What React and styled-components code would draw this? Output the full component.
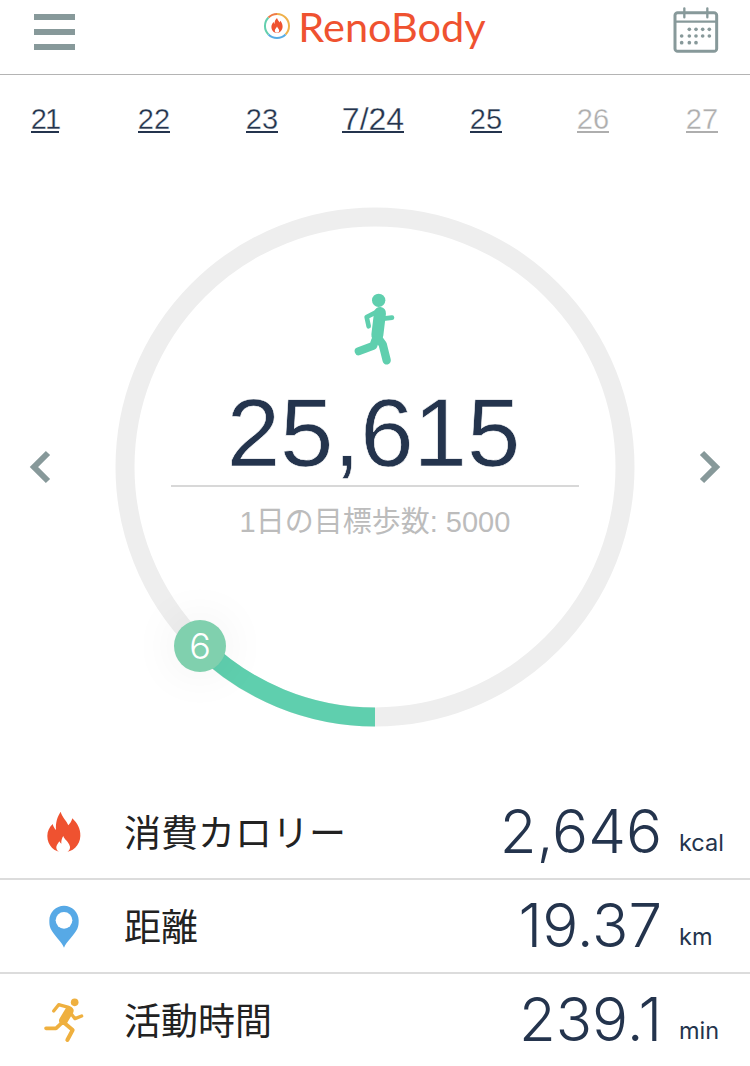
import React from 'react';
import styled, { createGlobalStyle } from 'styled-components';

const Global = createGlobalStyle`
  html, body { margin: 0; padding: 0; background: #fff; }
  body { font-family: "Liberation Sans", "Noto Sans CJK JP", sans-serif; color: #24344d; }
`;
const Page = styled.div`
  width: 750px; height: 1066px; overflow: hidden; display: flex; flex-direction: column;
`;
const Header = styled.header`
  height: 74px; flex: none; border-bottom: 1px solid #b4b4b4; padding: 0 20px 0 34px;
  display: flex; align-items: flex-start; justify-content: space-between;
`;
const Burger = styled.div`
  width: 41px; margin-top: 14px; display: flex; flex-direction: column; gap: 9px;
`;
const BurgerBar = styled.span`
  display: block; height: 6px; background: #87999a;
`;
const Logo = styled.div`
  display: flex; align-items: center; gap: 6px; margin-top: 2px; margin-left: 13px;
`;
const LogoText = styled.span`
  font-family: Lato, sans-serif; font-weight: 400; font-size: 41.5px; line-height: 48px;
  color: #ef5230;
`;
const IconSvg = styled.svg`
  display: block; flex: none;
`;
const Dates = styled.nav`
  height: 132px; flex: none; display: grid; grid-template-columns: 90px 128px 88px 134px 92px 122px 96px;
  justify-items: center; align-items: start; padding-top: 26px; box-sizing: border-box;
`;
const DateLink = styled.span`
  display: block; height: 30px; font-size: ${p => p.$big ? 32 : 29}px; line-height: 36px;
  letter-spacing: ${p => p.$track || 0}px;
  -webkit-text-stroke: .3px #fff;
  border-bottom: 2px solid ${p => p.$off ? '#aeaeae' : '#24344d'};
  color: ${p => p.$off ? '#aeaeae' : '#24344d'};
`;
const GaugeRow = styled.section`
  flex: none; height: 520px; display: flex; align-items: center; justify-content: space-between; padding: 0 28px;
`;
const Chevron = styled.svg`
  display: block; flex: none;
`;
const Gauge = styled.div`
  position: relative; width: 520px; height: 520px; flex: none; display: flex; flex-direction: column; align-items: center;
`;
const RingSvg = styled.svg`
  position: absolute; inset: 0; display: block;
`;
const Center = styled.div`
  position: relative; display: flex; flex-direction: column; align-items: center; margin-top: 78px;
`;
const Steps = styled.div`
  font-size: 96px; line-height: 100px; width: 408px; text-align: center; text-indent: -3px;
  -webkit-text-stroke: .6px #fff;
  padding-bottom: 2px; margin-top: 13px; border-bottom: 2px solid #d8d8d8; color: #24344d;
`;
const Goal = styled.div`
  font-size: 29px; line-height: 36px; margin-top: 17px; color: #bcbcbc;
`;
const Badge = styled.div`
  position: absolute; left: 59px; top: 412.5px; width: 52px; height: 52px; border-radius: 50%;
  background: #80d0ae; color: #fff; display: flex; align-items: center; justify-content: center;
  font-family: Inter, sans-serif; font-weight: 300; font-size: 36px; box-shadow: 0 0 50px rgba(0,0,0,.07);
`;
const Stats = styled.section`
  margin-top: 59px; display: flex; flex-direction: column;
`;
const Stat = styled.div`
  display: grid; grid-template-columns: 124px 1fr auto 88px; align-items: center; height: ${p => p.$h}px;
  border-bottom: ${p => p.$line ? '2px solid #dcdcdc' : 'none'}; box-sizing: border-box;
`;
const IconCell = styled.div`
  display: flex; justify-content: center; padding-left: 6px; margin-top: ${p => p.$shift}px;
`;
const Label = styled.div`
  font-family: "Noto Sans CJK JP", sans-serif; font-size: 37px; color: #222; line-height: 44px; margin-top: -3px;
`;
const Value = styled.div`
  font-family: Inter, sans-serif; font-weight: 350; font-size: 60px; line-height: 70px; color: #24344d; margin-top: -2px;
`;
const Unit = styled.div`
  font-family: Inter, sans-serif; font-size: 23.5px; padding-left: 17px; margin-top: 21px; color: #24344d;
`;

const BRAND = '#ef5230';

const LogoMark = () => (
  <IconSvg width="30" height="30" viewBox="0 0 30 30">
    <g fill="none" strokeWidth="2">
      <path d="M15 3 A12 12 0 0 1 27 15" stroke="#efb04a" />
      <path d="M27 15 A12 12 0 0 1 23.500 23.500" stroke="#f0b24b" />
      <path d="M23.5 23.5 A12 12 0 0 1 6.5 23.5" stroke="#58ace4" />
      <path d="M6.5 23.5 A12 12 0 0 1 6.5 6.5" stroke="#63cfae" />
      <path d="M6.5 6.5 A12 12 0 0 1 15 3" stroke="#ef7b45" />
    </g>
    <path fill={BRAND} d="M15 7c.5 2 2 3 2.600 4.400.3-.5.5-1 .6-1.600 1.600 1.600 2.400 3.600 2.400 5.800 0 3.400-2.400 6.400-5.600 6.400s-5.600-2.800-5.600-6.200c0-2 1-3.500 2.200-4.800.2.800.5 1.400 1 1.900C12.300 10.600 13.500 8.400 15 7z" />
    <path fill="#fff" d="M15 15.500c.4 1.400 2.200 2.500 2.200 4.200 0 1.300-1 2-2.200 2s-2.200-.7-2.200-2c0-1.700 1.800-2.800 2.200-4.200z" />
  </IconSvg>
);

const Walker = () => (
  <IconSvg width="70" height="85" viewBox="0 0 210 255">
    <circle cx="116" cy="46" r="20" fill="#5fcfae" />
    <g fill="none" stroke="#5fcfae" strokeLinecap="round" strokeLinejoin="round">
      <path d="M120 84 L112 150" strokeWidth="36" />
      <path d="M106 165 L100 182 L56 199" strokeWidth="24" />
      <path d="M115 160 L128 178 L140 226" strokeWidth="25" />
      <path d="M112 80 L80 96 L86 124" strokeWidth="14" />
      <path d="M130 101 L156 98" strokeWidth="14" />
    </g>
  </IconSvg>
);

const Flame = () => (
  <IconSvg width="70" height="60" viewBox="0 0 210 180">
    <path fill={BRAND} d="M92 35 C96 52 110 62 115 76 C120 70 125 64 127 55 C142 70 152 86 151 108 C150 136 128 157 100 157 C73 157 52 136 52 108 C52 94 58 82 68 72 C70 80 73 85 78 90 C76 68 82 50 92 35 Z" />
    <path fill="#fff" d="M100 108 C102 118 116 124 120 140 C121 150 112 160 100 160 C87 160 78 150 79 140 C81 133 85 130 88 124 C90 127 92 130 94 131 C93 122 96 114 100 108 Z" />
  </IconSvg>
);

const Pin = () => (
  <IconSvg width="70" height="60" viewBox="0 0 210 180">
    <path fill="#57a9e6" d="M102 155 C96 138 72 118 62 98 C58 90 58 82 58 73 C58 49 78 29 102 29 C126 29 146 49 146 73 C146 82 146 90 142 98 C132 118 108 138 102 155 Z" />
    <circle cx="102" cy="73" r="25" fill="#fff" />
  </IconSvg>
);

const Runner = () => (
  <IconSvg width="70" height="60" viewBox="0 0 210 180">
    <circle cx="134" cy="37" r="11.500" fill="#efb03f" />
    <g fill="none" stroke="#efb03f" strokeLinecap="round" strokeLinejoin="round">
      <path d="M118 62 L100 92" strokeWidth="26" />
      <path d="M116 52 L86 44 L71 63" strokeWidth="10" />
      <path d="M124 72 L135 86 L155 78" strokeWidth="10" />
      <path d="M94 100 L78 115 L48 115" strokeWidth="11" />
      <path d="M104 100 L128 120 L112 150" strokeWidth="12" />
    </g>
  </IconSvg>
);

const Calendar = () => {
  const dots = [];
  [88, 108, 128, 148].forEach(x => dots.push([x, 88]));
  [65, 88, 108, 128, 148].forEach(x => dots.push([x, 108]));
  [65, 88, 108].forEach(x => dots.push([x, 128]));
  return (
    <IconSvg width="70" height="60" viewBox="0 0 210 180">
      <rect x="45" y="38" width="125" height="116" rx="8" fill="none" stroke="#87999a" strokeWidth="9" />
      <path d="M45 65 H170" stroke="#87999a" strokeWidth="7" />
      <path d="M73 25 V52 M142 25 V52" stroke="#87999a" strokeWidth="7" strokeLinecap="round" />
      {dots.map(([x, y]) => <circle key={x + '-' + y} cx={x} cy={y} r="5.500" fill="#87999a" />)}
    </IconSvg>
  );
};

const dates = [
  { t: '21', track: -2 }, { t: '22' }, { t: '23' }, { t: '7/24', big: true }, { t: '25' }, { t: '26', off: true }, { t: '27', off: true },
];

const stats = [
  { icon: <Flame />, label: '消費カロリー', value: '2,646', unit: 'kcal', h: 94, line: true, shift: -4 },
  { icon: <Pin />, label: '距離', value: '19.37', unit: 'km', h: 94, line: true, shift: 0 },
  { icon: <Runner />, label: '活動時間', value: '239.1', unit: 'min', h: 92, shift: 0 },
];

export default function App() {
  return (
    <Page>
      <Global />
      <Header>
        <Burger><BurgerBar /><BurgerBar /><BurgerBar /></Burger>
        <Logo><LogoMark /><LogoText>RenoBody</LogoText></Logo>
        <Calendar />
      </Header>
      <Dates>
        {dates.map(d => <DateLink key={d.t} $big={d.big} $off={d.off} $track={d.track}>{d.t}</DateLink>)}
      </Dates>
      <GaugeRow>
        <Chevron width="24" height="34" viewBox="0 0 24 34"><path d="M20 3 L6 17 L20 31" fill="none" stroke="#87999a" strokeWidth="6" /></Chevron>
        <Gauge>
          <RingSvg width="520" height="520" viewBox="0 0 520 520">
            <circle cx="260" cy="260" r="250" fill="none" stroke="#eeeeee" strokeWidth="19" />
            <path d="M260 510 A250 250 0 0 1 85 438" fill="none" stroke="#5fcfae" strokeWidth="19" />
          </RingSvg>
          <Center>
            <Walker />
            <Steps>25,615</Steps>
            <Goal>1日の目標歩数: 5000</Goal>
          </Center>
          <Badge>6</Badge>
        </Gauge>
        <Chevron width="24" height="34" viewBox="0 0 24 34"><path d="M4 3 L18 17 L4 31" fill="none" stroke="#87999a" strokeWidth="6" /></Chevron>
      </GaugeRow>
      <Stats>
        {stats.map(s => (
          <Stat key={s.unit} $h={s.h} $line={s.line}>
            <IconCell $shift={s.shift}>{s.icon}</IconCell>
            <Label>{s.label}</Label>
            <Value>{s.value}</Value>
            <Unit>{s.unit}</Unit>
          </Stat>
        ))}
      </Stats>
    </Page>
  );
}
